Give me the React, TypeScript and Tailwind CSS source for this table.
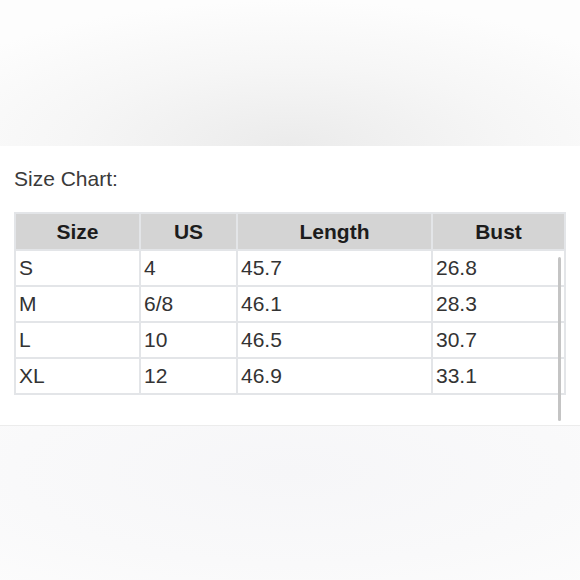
const rows = [
  ['S', '4', '45.7', '26.8'],
  ['M', '6/8', '46.1', '28.3'],
  ['L', '10', '46.5', '30.7'],
  ['XL', '12', '46.9', '33.1'],
]

const heads = ['Size', 'US', 'Length', 'Bust']
const widths = ['w-[125px]', 'w-[97px]', 'w-[195px]', 'w-auto']

export default function App() {
  return (
    <div className="flex h-[580px] w-[580px] flex-col overflow-hidden bg-white font-['Liberation_Sans',Arial,sans-serif]">
      <div className="h-[146px] shrink-0 bg-[radial-gradient(ellipse_70%_100%_at_50%_100%,#ebebeb_0%,#f6f6f6_55%,#fdfdfd_100%)]" />

      <section className="relative h-[280px] shrink-0 border-b border-[#ececec] bg-white px-[14px] pt-[20px]">
        <h2 className="text-[21px] leading-[26px] text-[#3a3a3a]">Size Chart:</h2>

        <table className="mt-[20px] w-[552px] table-fixed border-collapse border-2 border-[#e3e5e8] text-[21px] text-[#333]">
          <thead>
            <tr className="h-[37px] bg-[#d4d4d4]">
              {heads.map((h, i) => (
                <th
                  key={h}
                  className={`${widths[i]} border-2 border-[#e3e5e8] p-0 text-center font-bold text-[#1c1c1c]`}
                >
                  {h}
                </th>
              ))}
            </tr>
          </thead>
          <tbody>
            {rows.map((r) => (
              <tr key={r[0]} className="h-[36px]">
                {r.map((c, i) => (
                  <td key={i} className="border-2 border-[#e3e5e8] px-[3px] py-0 leading-[24px]">
                    {c}
                  </td>
                ))}
              </tr>
            ))}
          </tbody>
        </table>

        {/* scroll indicator */}
        <div className="absolute left-[558px] top-[111px] h-[164px] w-[3px] rounded-full bg-[#c4c4c4]" />
      </section>

      <div className="flex-1 bg-[radial-gradient(ellipse_80%_100%_at_50%_30%,#f6f6f8_0%,#f9f9fa_60%,#fcfcfc_100%)]" />
    </div>
  )
}
